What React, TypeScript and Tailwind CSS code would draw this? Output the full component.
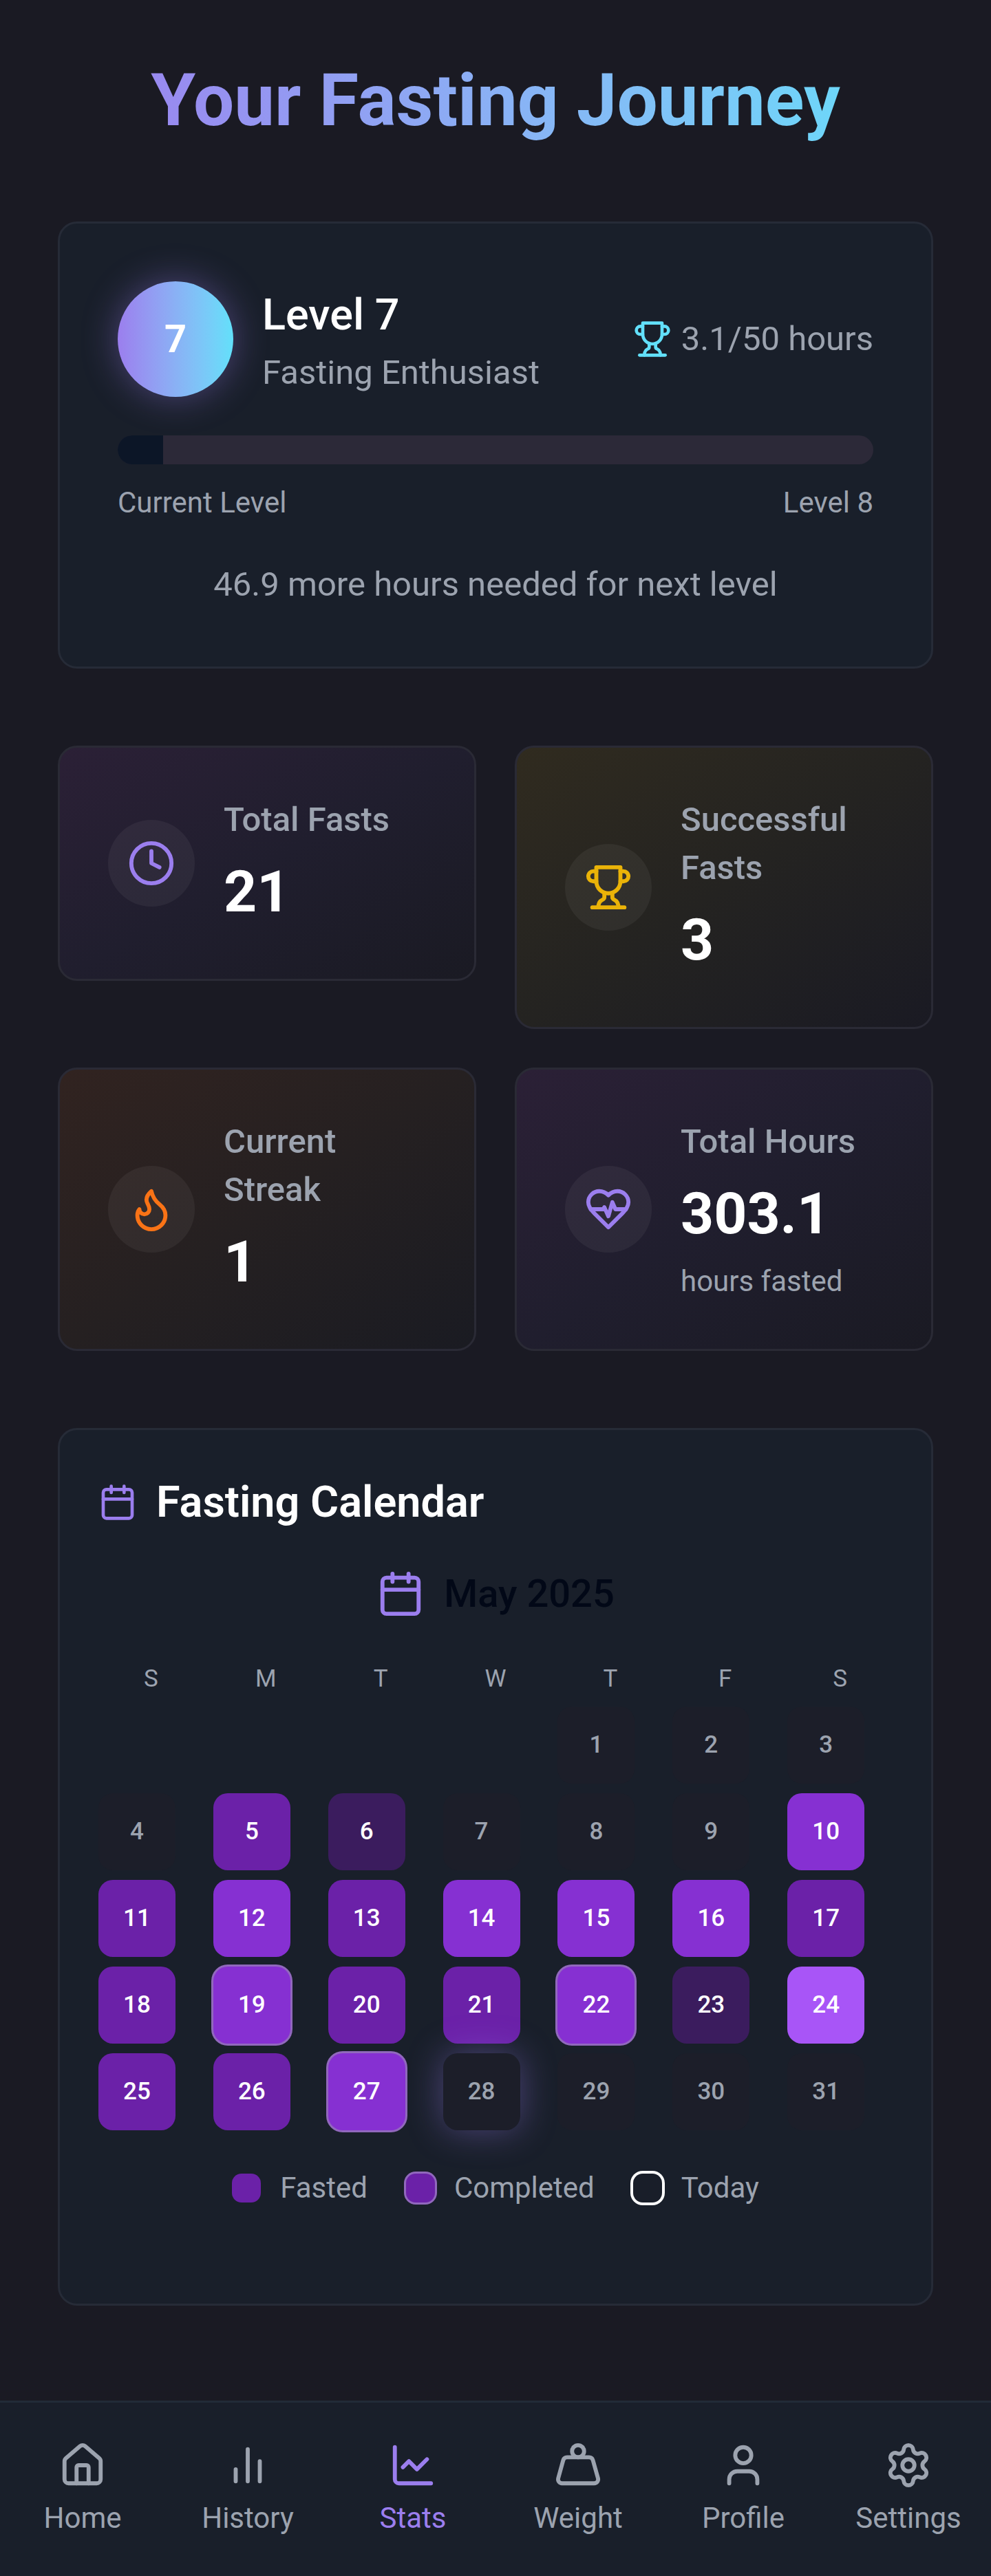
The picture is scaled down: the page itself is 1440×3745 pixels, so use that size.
import type { ReactNode } from "react";
import { Calendar, ChartLine, Clock, House, Settings, User, Weight } from "lucide-react";
import type { LucideIcon } from "lucide-react";

const strokeProps = {
  viewBox: "0 0 24 24",
  fill: "none",
  stroke: "currentColor",
  strokeWidth: 2,
  strokeLinecap: "round" as const,
  strokeLinejoin: "round" as const,
  "aria-hidden": true,
};

function HeartPulse({ className }: { className?: string }) {
  return (
    <svg {...strokeProps} className={className}>
      <path d="M19 14c1.49-1.46 3-3.21 3-5.5A5.5 5.5 0 0 0 16.5 3c-1.76 0-3 .5-4.5 2-1.5-1.5-2.74-2-4.5-2A5.5 5.5 0 0 0 2 8.5c0 2.3 1.5 4.05 3 5.5l7 7Z" />
      <path d="M3.22 12H9.5l.5-1 2 4.5 2-7 1.5 3.5h5.27" />
    </svg>
  );
}

function Trophy({ className }: { className?: string }) {
  return (
    <svg {...strokeProps} className={className}>
      <path d="M6 9H4.5a2.5 2.5 0 0 1 0-5H6" />
      <path d="M18 9h1.5a2.5 2.5 0 0 0 0-5H18" />
      <path d="M4 22h16" />
      <path d="M10 14.66V17c0 .55-.47.98-.97 1.21C7.85 18.75 7 20.24 7 22" />
      <path d="M14 14.66V17c0 .55.47.98.97 1.21C16.15 18.75 17 20.24 17 22" />
      <path d="M18 2H6v7a6 6 0 0 0 12 0V2Z" />
    </svg>
  );
}

function Flame({ className }: { className?: string }) {
  return (
    <svg {...strokeProps} className={className}>
      <path d="M8.5 14.5A2.5 2.5 0 0 0 11 12c0-1.38-.5-2-1-3-1.072-2.143-.224-4.054 2-6 .5 2.5 2 4.9 4 6.5 2 1.6 3 3.5 3 5.5a7 7 0 1 1-14 0c0-1.153.433-2.294 1-3a2.5 2.5 0 0 0 2.5 2.5z" />
    </svg>
  );
}

function Bars({ className }: { className?: string }) {
  return (
    <svg {...strokeProps} className={className}>
      <path d="M18 20V10M12 20V4M6 20v-6" />
    </svg>
  );
}

type StatProps = {
  icon: ReactNode;
  title: string;
  value: string;
  note?: string;
  tone: string;
};

function StatCard({ icon, title, value, note, tone }: StatProps) {
  return (
    <article className={`flex items-center gap-[42px] rounded-[28px] border-[3px] border-[#2a2a35] bg-linear-to-br p-[70px] ${tone}`}>
      <div className="shrink-0 rounded-full bg-white/5 p-7">{icon}</div>
      <div>
        <h3 className="text-[49px] leading-[70px] font-medium text-[#9ca3af]">{title}</h3>
        <p className="mt-3.5 text-[84px] leading-[112px] font-bold text-white">{value}</p>
        {note && <p className="mt-3.5 text-[42px] leading-14 text-[#9ca3af]">{note}</p>}
      </div>
    </article>
  );
}

const shades = {
  none: "bg-[#1c1e29] text-[#9ca3af]",
  low: "bg-[#3b1c5e] text-white",
  mid: "bg-[#6b21a8] text-white",
  high: "bg-[#8630d2] text-white",
  max: "bg-[#a855f7] text-white",
};
type Shade = keyof typeof shades;

const fasts: Record<number, Shade> = {
  5: "mid", 6: "low", 10: "high", 11: "mid", 12: "high", 13: "mid", 14: "high",
  15: "high", 16: "high", 17: "mid", 18: "mid", 19: "high", 20: "mid", 21: "mid",
  22: "high", 23: "low", 24: "max", 25: "mid", 26: "mid", 27: "high",
};
const completed = [19, 22, 27];
const today = 28;
const firstWeekday = 4;

function Day({ day }: { day: number }) {
  const ring = completed.includes(day) ? "ring-[3px] ring-[#9168bd]" : "";
  const glow = day === today ? "shadow-[0_0_52px_rgba(155,126,240,0.4)]" : "";
  return (
    <div className={`flex size-28 items-center justify-center rounded-[21px] text-[35px] leading-[52px] font-medium ${shades[fasts[day] ?? "none"]} ${ring} ${glow}`}>
      {day}
    </div>
  );
}

function LegendItem({ swatch, label }: { swatch: string; label: string }) {
  return (
    <li className="flex items-center gap-7">
      <span className={`size-[42px] rounded-[14px] ${swatch}`} />
      {label}
    </li>
  );
}

const navItems: { label: string; icon: LucideIcon | typeof Bars }[] = [
  { label: "Home", icon: House },
  { label: "History", icon: Bars },
  { label: "Stats", icon: ChartLine },
  { label: "Weight", icon: Weight },
  { label: "Profile", icon: User },
  { label: "Settings", icon: Settings },
];

const hours = 3.1;
const goal = 50;

export default function App() {
  return (
    <div className="flex min-h-screen flex-col bg-[#1a1a23] font-[Roboto,sans-serif] text-[#9ca3af]">
      <main className="flex flex-1 flex-col gap-28 px-[84px] pt-[84px] pb-28">
        <h1 className="bg-linear-to-r from-[#9b7eee] to-[#62e0fa] bg-clip-text text-center text-[105px] leading-[126px] font-bold text-transparent">
          Your Fasting Journey
        </h1>

        <section className="rounded-[28px] border-[3px] border-[#262b37] bg-[#191f2a] p-[84px]">
          <div className="flex items-center justify-between">
            <div className="flex items-center gap-[42px]">
              <div className="flex size-[168px] items-center justify-center rounded-full bg-linear-to-r from-[#9b7eee] to-[#62e0fa] text-[56px] leading-[84px] font-bold text-white shadow-[0_0_52px_rgba(155,126,240,0.4)]">
                7
              </div>
              <div>
                <h2 className="text-[63px] leading-[98px] font-medium text-white">Level 7</h2>
                <p className="text-[49px] leading-[70px]">Fasting Enthusiast</p>
              </div>
            </div>
            <p className="flex items-center gap-3.5 text-[49px] leading-[70px]">
              <Trophy className="size-14 text-[#62e0fa]" />
              {hours}/{goal} hours
            </p>
          </div>
          <div
            role="progressbar"
            aria-label="Progress to level 8"
            aria-valuenow={hours}
            aria-valuemin={0}
            aria-valuemax={goal}
            className="mt-14 h-[42px] overflow-hidden rounded-full bg-[#2c2938]"
          >
            <div className="h-full bg-[#0c1627]" style={{ width: `${Math.floor((hours / goal) * 100)}%` }} />
          </div>
          <div className="mt-7 flex justify-between text-[42px] leading-14">
            <span>Current Level</span>
            <span>Level 8</span>
          </div>
          <p className="mt-14 text-center text-[49px] leading-[70px]">46.9 more hours needed for next level</p>
        </section>

        <section aria-label="Statistics" className="grid grid-cols-2 items-start gap-14">
          <StatCard
            icon={<Clock className="size-[70px] text-[#9b7eee]" />}
            title="Total Fasts"
            value="21"
            tone="from-[#2b2036] via-[#201e2e] to-[#1a1a23]"
          />
          <StatCard
            icon={<Trophy className="size-[70px] text-[#eab308]" />}
            title="Successful Fasts"
            value="3"
            tone="from-[#302b1f] via-[#242321] to-[#1a1a23]"
          />
          <StatCard
            icon={<Flame className="size-[70px] text-[#f97316]" />}
            title="Current Streak"
            value="1"
            tone="from-[#312320] via-[#252021] to-[#1a1b22]"
          />
          <StatCard
            icon={<HeartPulse className="size-[70px] text-[#9b7eee]" />}
            title="Total Hours"
            value="303.1"
            note="hours fasted"
            tone="from-[#2b2036] via-[#201e2e] to-[#1a1a23]"
          />
        </section>

        <section className="rounded-[28px] border-[3px] border-[#262b37] bg-[#191f2a] px-14 pt-14 pb-[140px]">
          <h2 className="flex items-center gap-7 text-[63px] leading-[98px] font-semibold text-white">
            <Calendar className="size-14 text-[#9b7eee]" />
            Fasting Calendar
          </h2>
          <h3 className="mt-[42px] flex items-center justify-center gap-7 text-[56px] leading-[84px] font-medium text-[#020817]">
            <Calendar className="size-[70px] text-[#9b7eee]" />
            May 2025
          </h3>
          <div className="mt-14 grid grid-cols-7 gap-3.5">
            {["S", "M", "T", "W", "T", "F", "S"].map((name, i) => (
              <div key={i} className="text-center text-[35px] leading-[52px]">{name}</div>
            ))}
            {Array.from({ length: firstWeekday }, (_, i) => (
              <div key={`blank-${i}`} />
            ))}
            {Array.from({ length: 31 }, (_, i) => (
              <Day key={i + 1} day={i + 1} />
            ))}
          </div>
          <ul className="mt-14 flex justify-center gap-14 text-[42px] leading-14">
            <LegendItem swatch="bg-[#6b21a8]" label="Fasted" />
            <LegendItem swatch="bg-[#6b21a8] ring-[3px] ring-[#9168bd]" label="Completed" />
            <LegendItem swatch="bg-[#191e29] ring-4 ring-white" label="Today" />
          </ul>
        </section>
      </main>

      <nav className="grid grid-cols-6 border-t-[3px] border-[#212b37] bg-[#191f2a] py-14">
        {navItems.map(({ label, icon: Icon }) => (
          <a
            key={label}
            href="#"
            aria-current={label === "Stats" ? "page" : undefined}
            className="flex flex-col items-center gap-3.5 text-[42px] leading-14 aria-[current=page]:text-[#9b7eee]"
          >
            <Icon className="size-[70px]" />
            {label}
          </a>
        ))}
      </nav>
    </div>
  );
}
